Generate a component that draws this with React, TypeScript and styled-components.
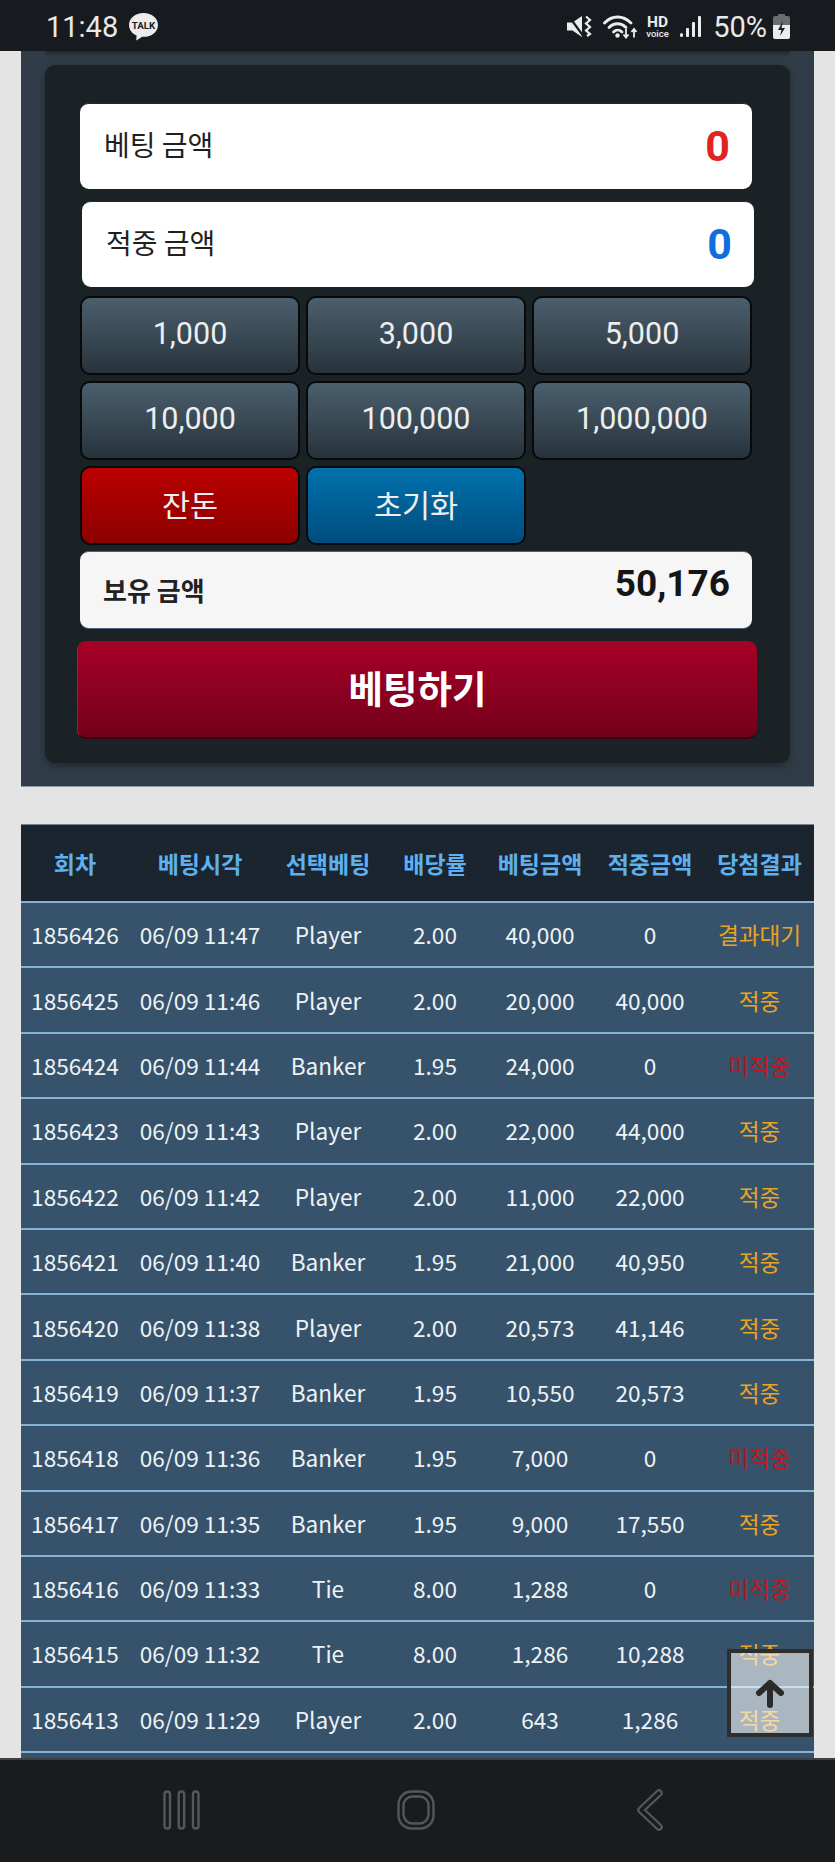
import styled, { createGlobalStyle } from "styled-components";

const GlobalStyle = createGlobalStyle`
  html, body {
    margin: 0;
    padding: 0;
    background: #e4e4e4;
  }
  * {
    box-sizing: border-box;
  }
`;

const Screen = styled.div`
  width: 835px;
  height: 1862px;
  display: flex;
  flex-direction: column;
  overflow: hidden;
  font-family: "Noto Sans CJK KR", Roboto, sans-serif;
`;

const StatusBar = styled.div`
  height: 51px;
  flex: none;
  background: #171b1f;
  color: #e9e9e9;
  display: flex;
  align-items: center;
  justify-content: space-between;
  padding: 2px 45px 0 46px;
  font-family: Roboto, sans-serif;
`;

const StatusGroup = styled.div`
  display: flex;
  align-items: center;
`;

const StatusGap = styled.span<{ $width: number }>`
  width: ${({ $width }) => $width}px;
`;

const Clock = styled.span`
  font-size: 29px;
  margin-right: 10px;
`;

const Percent = styled.span`
  font-size: 29px;
  margin: 0 6px 0 12px;
`;

const Content = styled.div`
  position: relative;
  flex: 1;
  min-height: 0;
  overflow: hidden;
  background: #e4e4e4;
  padding: 0 21px;
`;

const BetPanel = styled.section`
  background: #303d48;
  padding: 0 24px 23px;
  border-bottom: 1px solid #8a9aa8;
`;

const TopFade = styled.div`
  height: 14px;
  background: linear-gradient(#20292f, #303d48 45%);
`;

const InnerPanel = styled.div`
  background: #1b2226;
  border-radius: 10px;
  padding: 38px 38px 24px 35px;
  box-shadow: 0 3px 8px rgba(0, 0, 0, 0.35);
  display: flex;
  flex-direction: column;
`;

const AmountRow = styled.div<{ $shift?: number }>`
  height: 86px;
  background: #fff;
  border-radius: 9px;
  border-top: 1px solid #0d2a55;
  display: flex;
  align-items: center;
  justify-content: space-between;
  padding: 0 22px 0 24px;
  margin-left: ${({ $shift }) => $shift ?? 0}px;
  margin-right: ${({ $shift }) => -($shift ?? 0)}px;
  margin-bottom: ${({ $shift }) => ($shift ? 9 : 12)}px;
`;

const AmountLabel = styled.span`
  font-size: 28px;
  color: #1f1f1f;
  margin-top: -6px;
`;

const AmountValue = styled.span<{ $color: string }>`
  font-family: Roboto, sans-serif;
  font-weight: 700;
  font-size: 43px;
  color: ${({ $color }) => $color};
  margin-top: -2px;
`;

const ChipGrid = styled.div`
  display: grid;
  grid-template-columns: repeat(3, 220px);
  grid-auto-rows: 79px;
  gap: 6px;
  margin-bottom: 6px;
`;

const ChipButton = styled.button<{ $tone?: "red" | "blue" }>`
  border: 2px solid #07090b;
  border-radius: 10px;
  padding: 0 0 4px;
  color: #eeeeee;
  font-family: Roboto, "Noto Sans CJK KR", sans-serif;
  font-size: 30.5px;
  background: ${({ $tone }) =>
    $tone === "red"
      ? "linear-gradient(#bb0000, #8c0000)"
      : $tone === "blue"
      ? "linear-gradient(#0072ad, #004d7e)"
      : "linear-gradient(#4b5f6d, #27333c)"};
`;

const HeldRow = styled.div`
  height: 78px;
  background: #f6f6f6;
  border-radius: 9px;
  border-top: 1px solid #50607a;
  border-bottom: 1px solid #50607a;
  display: flex;
  align-items: center;
  justify-content: space-between;
  padding: 0 22px 0 23px;
  margin-bottom: 12px;
`;

const HeldLabel = styled.span`
  font-size: 26px;
  font-weight: 700;
  color: #222;
  margin-top: -2px;
`;

const HeldValue = styled.span`
  font-family: Roboto, sans-serif;
  font-size: 37px;
  font-weight: 700;
  color: #151515;
  margin-top: -14px;
`;

const SubmitButton = styled.button`
  height: 98px;
  margin: 0 -5px 0 -3px;
  border: none;
  border-bottom: 2px solid #3a000c;
  border-left: 1px solid #c0102a;
  border-radius: 9px;
  background: linear-gradient(#a80027, #72001a);
  color: #fff;
  font-family: "Noto Sans CJK KR", sans-serif;
  font-size: 37.5px;
  font-weight: 700;
  padding: 0 0 6px;
`;

const HistoryTable = styled.section`
  margin-top: 37px;
`;

const COLUMNS = "108px 142px 114px 100px 110px 110px 109px";

const HeadRow = styled.div`
  display: grid;
  grid-template-columns: ${COLUMNS};
  align-items: center;
  height: 77px;
  background: #1a2530;
  border-top: 1px solid #75818c;
`;

const HeadCell = styled.div`
  text-align: center;
  font-size: 23px;
  font-weight: 700;
  color: #5eb0ee;
  white-space: nowrap;
`;

const BodyRow = styled.div`
  display: grid;
  grid-template-columns: ${COLUMNS};
  align-items: center;
  height: 65.4px;
  background: #36536b;
  border-top: 2px solid #86b3d3;
`;

const BodyCell = styled.div<{ $color?: string }>`
  text-align: center;
  font-size: 22.6px;
  color: ${({ $color }) => $color ?? "#eef2f5"};
  white-space: nowrap;
`;

const TopButton = styled.button`
  position: absolute;
  right: 22px;
  bottom: 21px;
  width: 86px;
  height: 88px;
  border: 4px solid #2e2e2e;
  background: rgba(255, 255, 255, 0.58);
  display: flex;
  align-items: center;
  justify-content: center;
  padding: 0;
`;

const NavBar = styled.div`
  height: 104px;
  flex: none;
  background: #181c1f;
  border-top: 2px solid #3c4044;
  display: flex;
  align-items: center;
  justify-content: center;
  padding: 0 4px 2px 0;
`;

const NavSlot = styled.div`
  width: 234px;
  display: flex;
  justify-content: center;
`;

const KakaoIcon = () => (
  <svg width="31" height="29" viewBox="0 0 30 28">
    <path d="M15 1C7 1 1 6 1 12.5c0 4.6 3 8.4 7.3 10.3L8 27.5l5.800-3.600c.4 0 .8.100 1.200.100 8 0 14-5 14-11.500S23 1 15 1z" fill="#ececec" />
    <text x="15" y="16.5" textAnchor="middle" fontFamily="Roboto, sans-serif" fontSize="9.5" fontWeight="700" fill="#1b1b1b">TALK</text>
  </svg>
);

const MuteIcon = () => (
  <svg width="25" height="23" viewBox="0 0 25 23">
    <path d="M0 7.500h5.500L15 1v21l-9.500-6.500H0z" fill="#ececec" />
    <path d="M1 0l16 22" stroke="#171b1f" strokeWidth="2.2" />
    <path d="M19 1.500l4 3.500-4 3.500 4 3.500-4 3.500 4 3.500-3 2" stroke="#ececec" strokeWidth="2.2" fill="none" />
  </svg>
);

const WifiIcon = () => (
  <svg width="35" height="25" viewBox="0 0 35 25">
    <g fill="none" stroke="#ececec" strokeWidth="2.8" strokeLinecap="round">
      <path d="M1.500 9C9 1 20 1 28 9" />
      <path d="M6 13.500c5-5 12-5 17 0" />
      <path d="M10.500 18c2.500-2.500 6-2.500 8.500 0" />
    </g>
    <circle cx="14.5" cy="21.5" r="2.2" fill="#ececec" />
    <path d="M23 15v8m-2.500-2.500L23 23.500l2.500-3M31 23.500v-8m-2.500 2.500L31 15l2.500 3" fill="none" stroke="#ececec" strokeWidth="1.8" />
  </svg>
);

const HdIcon = () => (
  <svg width="27" height="25" viewBox="0 0 27 25">
    <text x="13.5" y="13" textAnchor="middle" fontFamily="Roboto, sans-serif" fontSize="15.5" fontWeight="700" fill="#ececec">HD</text>
    <text x="13.5" y="23" textAnchor="middle" fontFamily="Roboto, sans-serif" fontSize="9.5" fontWeight="500" fill="#ececec">voice</text>
  </svg>
);

const SignalIcon = () => (
  <svg width="21" height="23" viewBox="0 0 21 23">
    <rect x="0" y="18" width="3" height="4" rx="1.5" fill="#ececec" />
    <rect x="6" y="13" width="3" height="9" rx="1" fill="#ececec" />
    <rect x="12" y="7" width="3" height="15" rx="1" fill="#ececec" />
    <rect x="18" y="1" width="3" height="21" rx="1" fill="#ececec" />
  </svg>
);

const BatteryIcon = () => (
  <svg width="17" height="25" viewBox="0 0 17 25">
    <path d="M5 0h7v2h3a2 2 0 0 1 2 2v7H0V4a2 2 0 0 1 2-2h3z" fill="#6a6d70" />
    <path d="M0 11h17v12a2 2 0 0 1-2 2H2a2 2 0 0 1-2-2z" fill="#ececec" />
    <path d="M10 7l-5 9h3.500l-1.500 6 5-8H8.500z" fill="#171b1f" />
  </svg>
);

const ArrowUpIcon = () => (
  <svg width="30" height="30" viewBox="0 0 30 30" fill="none" stroke="#2b2b2b" strokeWidth="6" strokeLinecap="round" strokeLinejoin="round">
    <path d="M15 5v22M4 15L15 5l11 10" />
  </svg>
);

const MenuIcon = () => (
  <svg width="37" height="40" viewBox="0 0 37 40" fill="none" stroke="#55585b" strokeWidth="2.4">
    <rect x="1.5" y="1.5" width="5.5" height="37" rx="2.7" />
    <rect x="15.7" y="1.5" width="5.5" height="37" rx="2.7" />
    <rect x="30" y="1.5" width="5.5" height="37" rx="2.7" />
  </svg>
);

const HomeIcon = () => (
  <svg width="38" height="40" viewBox="0 0 38 40" fill="none" stroke="#55585b" strokeWidth="2.4">
    <rect x="1.5" y="1.5" width="35" height="37" rx="13" />
    <rect x="6.5" y="6.5" width="25" height="27" rx="9" />
  </svg>
);

const BackIcon = () => (
  <svg width="26" height="42" viewBox="0 0 26 42" fill="none" strokeLinecap="round" strokeLinejoin="round">
    <path d="M22 4L4 21l18 17" stroke="#55585b" strokeWidth="7.5" />
    <path d="M22 4L4 21l18 17" stroke="#181c1f" strokeWidth="3.2" />
  </svg>
);

const HEADERS = ["회차", "베팅시각", "선택베팅", "배당률", "베팅금액", "적중금액", "당첨결과"];

const ORANGE = "#eda31f";
const RED = "#c4141c";

const ROWS: [string, string, string, string, string, string, string][] = [
  ["1856426", "06/09 11:47", "Player", "2.00", "40,000", "0", "결과대기"],
  ["1856425", "06/09 11:46", "Player", "2.00", "20,000", "40,000", "적중"],
  ["1856424", "06/09 11:44", "Banker", "1.95", "24,000", "0", "미적중"],
  ["1856423", "06/09 11:43", "Player", "2.00", "22,000", "44,000", "적중"],
  ["1856422", "06/09 11:42", "Player", "2.00", "11,000", "22,000", "적중"],
  ["1856421", "06/09 11:40", "Banker", "1.95", "21,000", "40,950", "적중"],
  ["1856420", "06/09 11:38", "Player", "2.00", "20,573", "41,146", "적중"],
  ["1856419", "06/09 11:37", "Banker", "1.95", "10,550", "20,573", "적중"],
  ["1856418", "06/09 11:36", "Banker", "1.95", "7,000", "0", "미적중"],
  ["1856417", "06/09 11:35", "Banker", "1.95", "9,000", "17,550", "적중"],
  ["1856416", "06/09 11:33", "Tie", "8.00", "1,288", "0", "미적중"],
  ["1856415", "06/09 11:32", "Tie", "8.00", "1,286", "10,288", "적중"],
  ["1856413", "06/09 11:29", "Player", "2.00", "643", "1,286", "적중"],
];

const CHIPS = ["1,000", "3,000", "5,000", "10,000", "100,000", "1,000,000"];

export default function App() {
  return (
    <Screen>
      <GlobalStyle />
      <StatusBar>
        <StatusGroup>
          <Clock>11:48</Clock>
          <KakaoIcon />
        </StatusGroup>
        <StatusGroup>
          <MuteIcon />
          <StatusGap $width={11} />
          <WifiIcon />
          <StatusGap $width={6} />
          <HdIcon />
          <StatusGap $width={9} />
          <SignalIcon />
          <Percent>50%</Percent>
          <BatteryIcon />
        </StatusGroup>
      </StatusBar>

      <Content>
        <BetPanel>
          <TopFade />
          <InnerPanel>
            <AmountRow>
              <AmountLabel>베팅 금액</AmountLabel>
              <AmountValue $color="#e32322">0</AmountValue>
            </AmountRow>
            <AmountRow $shift={2}>
              <AmountLabel>적중 금액</AmountLabel>
              <AmountValue $color="#0f6fdc">0</AmountValue>
            </AmountRow>
            <ChipGrid>
              {CHIPS.map((chip) => (
                <ChipButton key={chip}>{chip}</ChipButton>
              ))}
              <ChipButton $tone="red">잔돈</ChipButton>
              <ChipButton $tone="blue">초기화</ChipButton>
            </ChipGrid>
            <HeldRow>
              <HeldLabel>보유 금액</HeldLabel>
              <HeldValue>50,176</HeldValue>
            </HeldRow>
            <SubmitButton>베팅하기</SubmitButton>
          </InnerPanel>
        </BetPanel>

        <HistoryTable>
          <HeadRow>
            {HEADERS.map((title) => (
              <HeadCell key={title}>{title}</HeadCell>
            ))}
          </HeadRow>
          {ROWS.map((row) => (
            <BodyRow key={row[0]}>
              {row.map((value, index) => (
                <BodyCell
                  key={index}
                  $color={index === 6 ? (value === "미적중" ? RED : ORANGE) : undefined}
                >
                  {value}
                </BodyCell>
              ))}
            </BodyRow>
          ))}
          {/* next row is cut off by the nav bar */}
          <BodyRow />
        </HistoryTable>

        <TopButton>
          <ArrowUpIcon />
        </TopButton>
      </Content>

      <NavBar>
        <NavSlot>
          <MenuIcon />
        </NavSlot>
        <NavSlot>
          <HomeIcon />
        </NavSlot>
        <NavSlot>
          <BackIcon />
        </NavSlot>
      </NavBar>
    </Screen>
  );
}
